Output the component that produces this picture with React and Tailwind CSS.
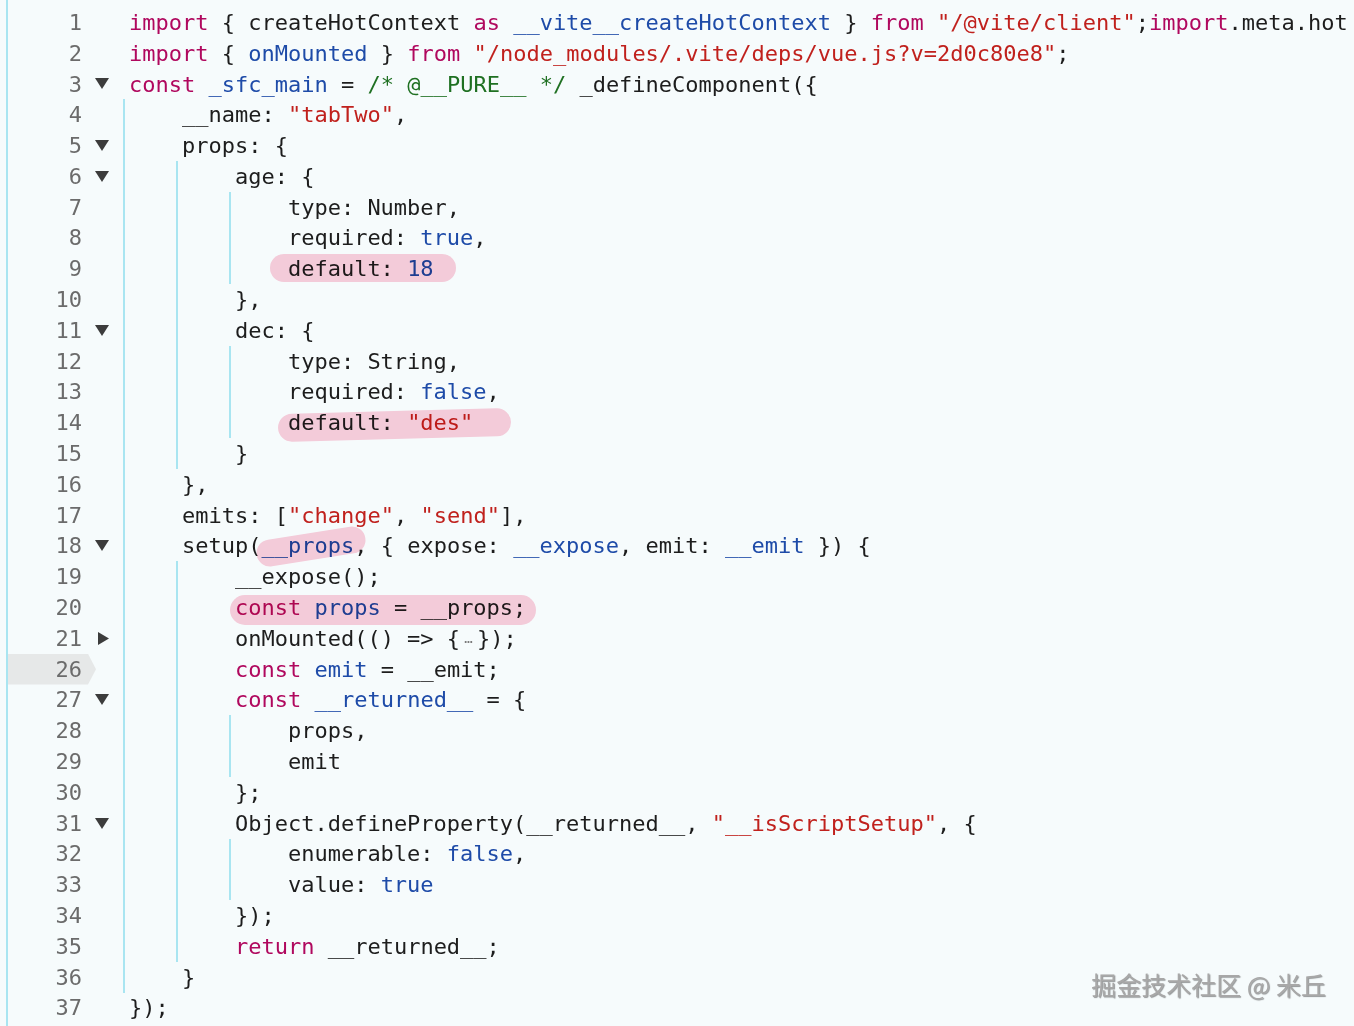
import React from "react"

const colors = {
  k: "text-[#b0085e]",
  s: "text-[#c0211d]",
  v: "text-[#1e4ba8]",
  c: "text-[#1f7022]",
  p: "text-[#1d1d1d]",
}

// [number, indent level, fold, tokens, active]
const lines = [
  [1, 0, null, [["k", "import"], ["p", " { createHotContext "], ["k", "as"], ["p", " "], ["v", "__vite__createHotContext"], ["p", " } "], ["k", "from"], ["p", " "], ["s", "\"/@vite/client\""], ["p", ";"], ["k", "import"], ["p", ".meta.hot"]]],
  [2, 0, null, [["k", "import"], ["p", " { "], ["v", "onMounted"], ["p", " } "], ["k", "from"], ["p", " "], ["s", "\"/node_modules/.vite/deps/vue.js?v=2d0c80e8\""], ["p", ";"]]],
  [3, 0, "down", [["k", "const"], ["p", " "], ["v", "_sfc_main"], ["p", " = "], ["c", "/* @__PURE__ */"], ["p", " _defineComponent({"]]],
  [4, 1, null, [["p", "__name: "], ["s", "\"tabTwo\""], ["p", ","]]],
  [5, 1, "down", [["p", "props: {"]]],
  [6, 2, "down", [["p", "age: {"]]],
  [7, 3, null, [["p", "type: Number,"]]],
  [8, 3, null, [["p", "required: "], ["v", "true"], ["p", ","]]],
  [9, 3, null, [["p", "default: "], ["v", "18"]]],
  [10, 2, null, [["p", "},"]]],
  [11, 2, "down", [["p", "dec: {"]]],
  [12, 3, null, [["p", "type: String,"]]],
  [13, 3, null, [["p", "required: "], ["v", "false"], ["p", ","]]],
  [14, 3, null, [["p", "default: "], ["s", "\"des\""]]],
  [15, 2, null, [["p", "}"]]],
  [16, 1, null, [["p", "},"]]],
  [17, 1, null, [["p", "emits: ["], ["s", "\"change\""], ["p", ", "], ["s", "\"send\""], ["p", "],"]]],
  [18, 1, "down", [["p", "setup("], ["v", "__props"], ["p", ", { expose: "], ["v", "__expose"], ["p", ", emit: "], ["v", "__emit"], ["p", " }) {"]]],
  [19, 2, null, [["p", "__expose();"]]],
  [20, 2, null, [["k", "const"], ["p", " "], ["v", "props"], ["p", " = __props;"]]],
  [21, 2, "right", [["p", "onMounted(() => {"], ["e", "…"], ["p", "});"]]],
  [26, 2, null, [["k", "const"], ["p", " "], ["v", "emit"], ["p", " = __emit;"]], true],
  [27, 2, "down", [["k", "const"], ["p", " "], ["v", "__returned__"], ["p", " = {"]]],
  [28, 3, null, [["p", "props,"]]],
  [29, 3, null, [["p", "emit"]]],
  [30, 2, null, [["p", "};"]]],
  [31, 2, "down", [["p", "Object.defineProperty(__returned__, "], ["s", "\"__isScriptSetup\""], ["p", ", {"]]],
  [32, 3, null, [["p", "enumerable: "], ["v", "false"], ["p", ","]]],
  [33, 3, null, [["p", "value: "], ["v", "true"]]],
  [34, 2, null, [["p", "});"]]],
  [35, 2, null, [["k", "return"], ["p", " __returned__;"]]],
  [36, 1, null, [["p", "}"]]],
  [37, 0, null, [["p", "});"]]],
]

function Fold({ type }) {
  if (type === "down") {
    return (
      <svg width="14" height="11" viewBox="0 0 14 11" className="-ml-px">
        <path d="M0 0 H14 L7 11 Z" fill="#3c3c3c" />
      </svg>
    )
  }
  if (type === "right") {
    return (
      <svg width="11" height="13" viewBox="0 0 11 13" className="ml-[2px]">
        <path d="M0 0 L11 6.5 L0 13 Z" fill="#3c3c3c" />
      </svg>
    )
  }
  return null
}

function CodeLine({ line }) {
  const [num, indent, fold, tokens, active] = line
  return (
    <div className="flex h-[30.8px] items-stretch">
      <div
        className={
          active
            ? "flex w-[88px] items-center justify-end bg-[#e6e8e8] pr-[14px] text-[#6b6b6b] [clip-path:polygon(0_0,calc(100%-8px)_0,100%_50%,calc(100%-8px)_100%,0_100%)]"
            : "flex w-[88px] items-center justify-end pr-[14px] text-[#6b6b6b]"
        }
      >
        {num}
      </div>
      <div className="flex w-[27px] items-center">
        <Fold type={fold} />
      </div>
      {Array.from({ length: indent }).map((_, i) => (
        <div key={i} className="w-[4ch] shrink-0 border-l-2 border-[#a9e5f1]" />
      ))}
      <div className="flex items-center whitespace-pre pl-[6px]">
        {tokens.map(([t, text], i) =>
          t === "e" ? (
            <span key={i} className="inline-block w-[2ch] text-center text-[14px] text-[#7a7a7a]">
              {text}
            </span>
          ) : (
            <span key={i} className={colors[t]}>
              {text}
            </span>
          )
        )}
      </div>
    </div>
  )
}

export default function App() {
  return (
    <div className="relative h-[1026px] overflow-hidden bg-[#f6fbfc] font-['DejaVu_Sans_Mono',monospace] text-[22px]">
      <div className="ml-[6px] h-full border-l-2 border-[#a9e5f1] pt-[7px]">
        {lines.map((line) => (
          <CodeLine key={line[0]} line={line} />
        ))}
      </div>

      {/* hand-drawn marks */}
      <div className="absolute left-[270px] top-[254px] h-[28px] w-[186px] rounded-full bg-[#fccfdc] mix-blend-multiply" />
      <div className="absolute left-[278px] top-[411px] h-[28px] w-[233px] rotate-[-1.5deg] rounded-full bg-[#fccfdc] mix-blend-multiply" />
      <div className="absolute left-[256px] top-[533px] h-[27px] w-[110px] rotate-[-9deg] rounded-full bg-[#fccfdc] mix-blend-multiply" />
      <div className="absolute left-[230px] top-[595px] h-[30px] w-[306px] rounded-full bg-[#fccfdc] mix-blend-multiply" />

      <div className="absolute bottom-[29px] right-[28px] font-['Noto_Sans_CJK_SC',sans-serif] text-[25px] leading-none text-[#a8a8a8] [text-shadow:1px_1px_1px_rgba(0,0,0,0.4)]">
        掘金技术社区 @ 米丘
      </div>
    </div>
  )
}
